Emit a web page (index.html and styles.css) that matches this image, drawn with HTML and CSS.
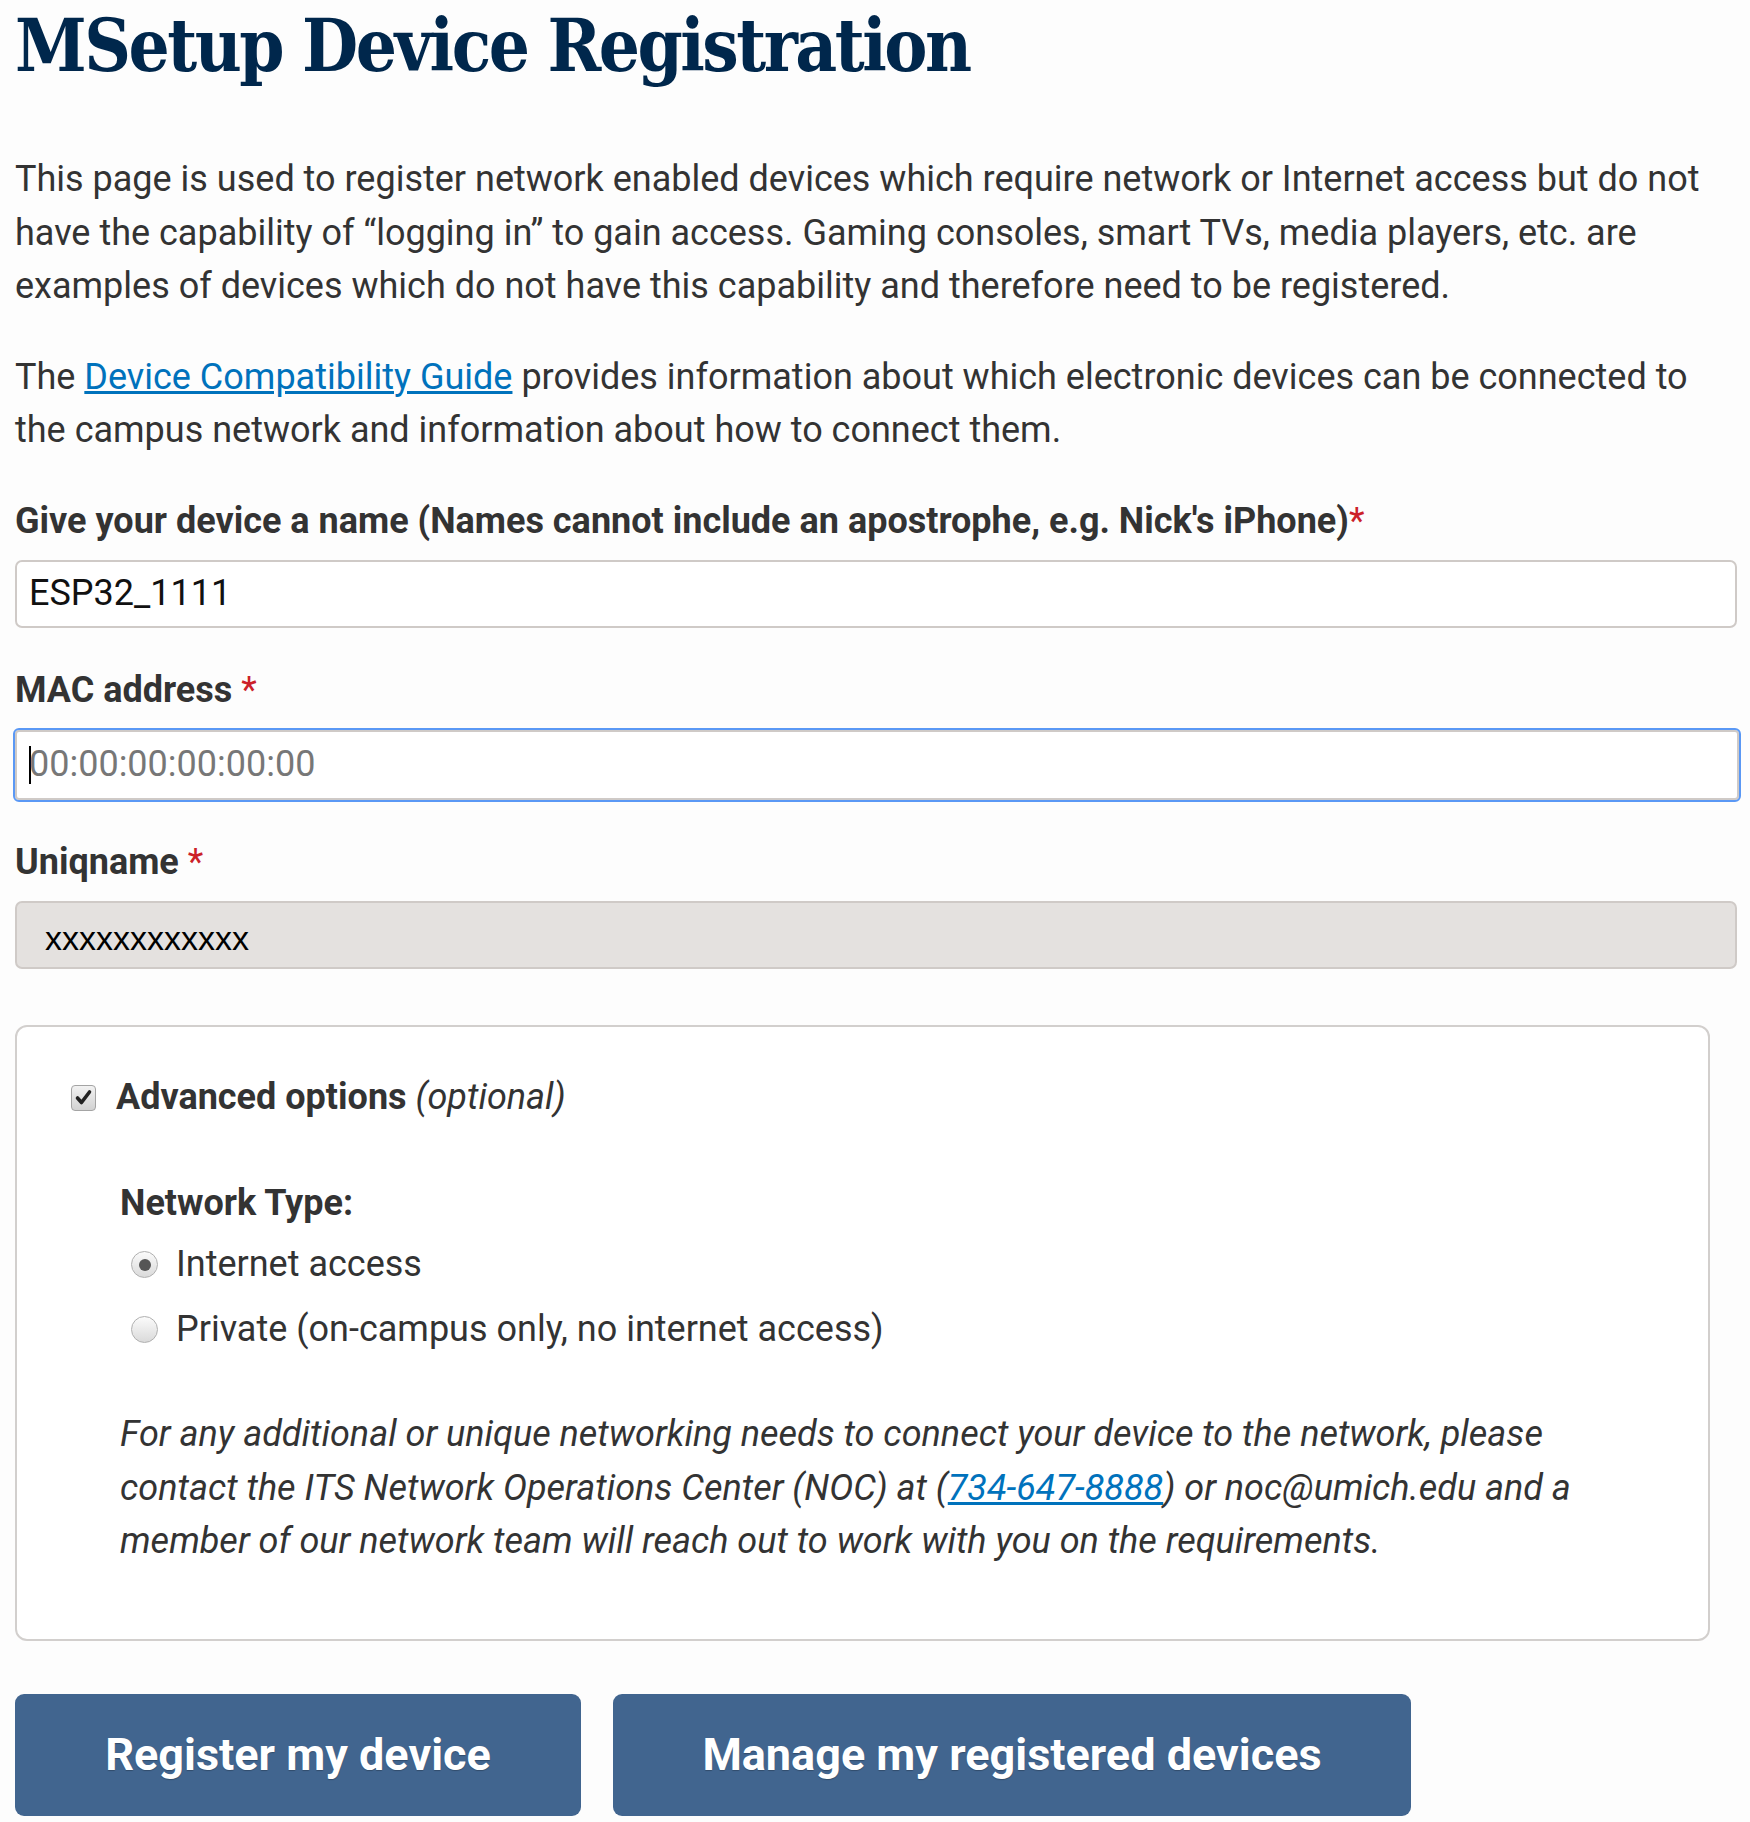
FILE: index.html
```html
<!DOCTYPE html>
<html lang="en">
<head>
<meta charset="utf-8">
<title>MSetup Device Registration</title>
<link rel="stylesheet" href="styles.css">
</head>
<body>
<main class="page">
  <h1 class="title">MSetup Device Registration</h1>
  <p class="intro">This page is used to register network enabled devices which require network or Internet access but do not have the capability of “logging in” to gain access. Gaming consoles, smart TVs, media players, etc. are examples of devices which do not have this capability and therefore need to be registered.</p>
  <p class="intro">The <a href="#" class="link">Device Compatibility Guide</a> provides information about which electronic devices can be connected to the campus network and information about how to connect them.</p>

  <form class="form">
    <label class="label">Give your device a name (Names cannot include an apostrophe, e.g. Nick's iPhone)<span class="req">*</span></label>
    <div class="input">ESP32_1111</div>

    <label class="label">MAC address <span class="req">*</span></label>
    <div class="input input-focus"><span class="caret"></span><span class="placeholder">00:00:00:00:00:00</span></div>

    <label class="label">Uniqname <span class="req">*</span></label>
    <div class="input input-disabled">xxxxxxxxxxxx</div>

    <div class="panel">
      <div class="adv">
        <span class="checkbox">
          <svg width="19" height="19" viewBox="0 0 19 19"><path d="M3.5 10 L7.5 14.5 L15.5 4" fill="none" stroke="#222" stroke-width="3.6" stroke-linecap="round" stroke-linejoin="round"/></svg>
        </span>
        <span class="adv-text"><b>Advanced options</b> <i>(optional)</i></span>
      </div>
      <div class="net">
        <div class="net-title">Network Type:</div>
        <div class="radio-row"><span class="radio radio-on"></span><span>Internet access</span></div>
        <div class="radio-row"><span class="radio"></span><span>Private (on-campus only, no internet access)</span></div>
        <p class="note">For any additional or unique networking needs to connect your device to the network, please contact the ITS Network Operations Center (NOC) at (<a href="#" class="link">734-647-8888</a>) or noc@umich.edu and a member of our network team will reach out to work with you on the requirements.</p>
      </div>
    </div>

    <div class="buttons">
      <button type="button" class="btn btn-register">Register my device</button>
      <button type="button" class="btn btn-manage">Manage my registered devices</button>
    </div>
  </form>
</main>
</body>
</html>
```
FILE: styles.css
```css
html, body {
  margin: 0;
  padding: 0;
  background: #fdfdfd;
}
body {
  font-family: Roboto, "Noto Sans", sans-serif;
  color: #333333;
  font-size: 36px;
  line-height: 53.5px;
}
.page {
  padding: 0 13px 0 15px;
}
.title {
  font-family: "DejaVu Serif", serif;
  font-stretch: condensed;
  font-weight: bold;
  color: #00274c;
  font-size: 72px;
  line-height: 84px;
  margin: 4px 0 0 0;
  letter-spacing: -2.5px;
}
.intro {
  margin: 65px 0 0 0;
}
.intro + .intro {
  margin-top: 37px;
}
.link {
  color: #0072bc;
  text-decoration: underline;
}
.form {
  display: flex;
  flex-direction: column;
  margin-top: 37px;
}
.label {
  font-weight: bold;
  display: block;
}
.req {
  color: #cc2129;
  font-weight: normal;
}
.input {
  box-sizing: border-box;
  height: 68px;
  margin: 12px 0 36px 0;
  border: 2px solid #cfcac7;
  border-radius: 7px;
  background: #ffffff;
  padding: 0 12px;
  display: flex;
  align-items: center;
  color: #111;
  font-size: 36px;
}
.input-focus {
  outline: 2px solid #5a98f5;
  outline-offset: 0;
  height: 70px;
  border-radius: 4px;
  margin-right: -2px;
}
.caret {
  width: 2px;
  height: 38px;
  background: #000;
  margin-right: -2px;
}
.placeholder {
  color: #777;
}
.input-disabled {
  background: #e4e1df;
  font-family: "Liberation Sans", Arial, sans-serif;
  font-size: 34px;
  padding: 8px 0 0 28px;
  color: #000;
  margin-bottom: 56px;
}
.panel {
  box-sizing: border-box;
  width: 1695px;
  border: 2px solid #d2cfcd;
  border-radius: 12px;
  background: #ffffff;
  padding: 44px 0 70px 0;
}
.adv {
  display: flex;
  align-items: center;
  gap: 20px;
  padding-left: 54px;
}
.checkbox {
  box-sizing: border-box;
  width: 25px;
  height: 26px;
  border: 1.5px solid #a4a4a4;
  border-radius: 4px;
  background: linear-gradient(#f2f2f2, #d2d2d2);
  display: flex;
  align-items: center;
  justify-content: center;
}
.adv-text i {
  font-style: italic;
}
.net {
  padding-left: 103px;
  margin-top: 52px;
}
.net-title {
  font-weight: bold;
  margin-bottom: 2px;
}
.radio-row {
  display: flex;
  align-items: center;
  gap: 18px;
  height: 65px;
  padding-left: 11px;
}
.radio {
  box-sizing: border-box;
  width: 27px;
  height: 27px;
  border-radius: 50%;
  border: 1.5px solid #b0b0b0;
  background: linear-gradient(#fbfbfb, #dadada);
  display: flex;
  align-items: center;
  justify-content: center;
}
.radio-on::after {
  content: "";
  width: 12px;
  height: 12px;
  border-radius: 50%;
  background: #555;
}
.note {
  font-style: italic;
  margin: 46px 80px 0 0;
}
.buttons {
  display: flex;
  gap: 32px;
  margin-top: 53px;
}
.btn {
  height: 122px;
  border: none;
  border-radius: 9px;
  background: #41658f;
  color: #ffffff;
  font-family: Roboto, sans-serif;
  font-weight: bold;
  font-size: 45px;
  text-shadow: 0 1px 1px rgba(0,0,0,0.25);
  padding: 0;
}
.btn-register {
  width: 566px;
}
.btn-manage {
  width: 798px;
}
```
